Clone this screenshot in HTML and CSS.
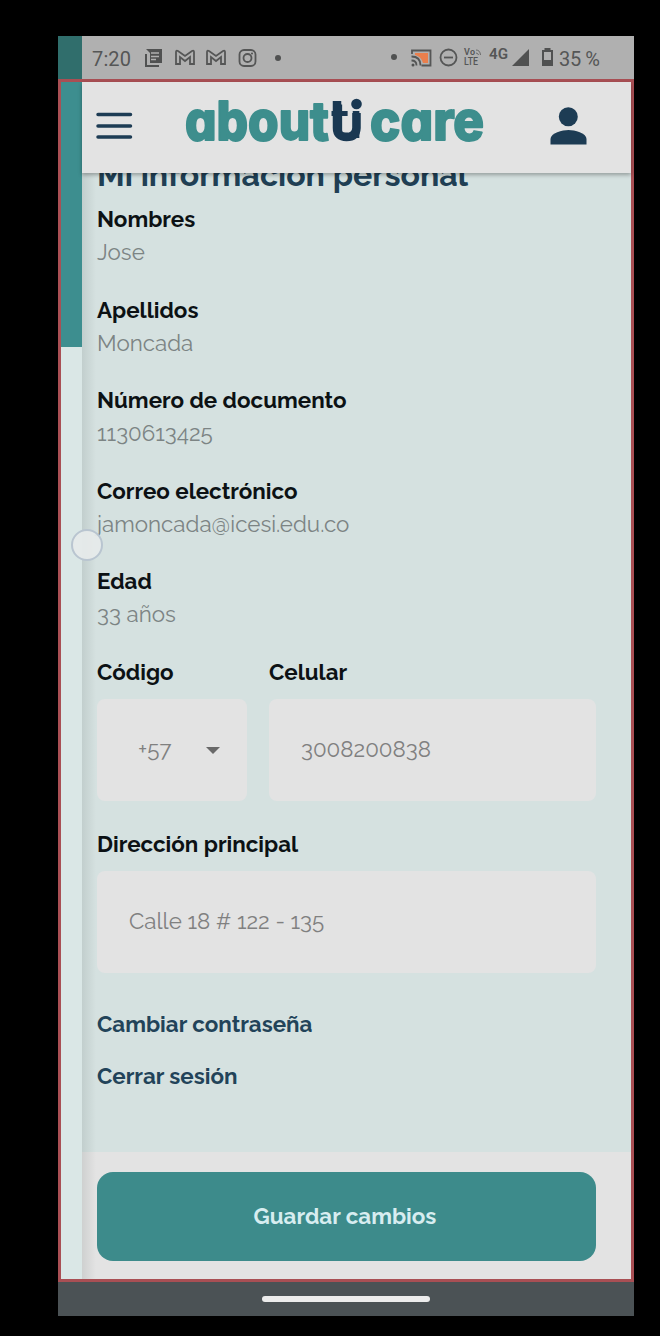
FILE: index.html
```html
<!DOCTYPE html>
<html lang="es">
<head>
<meta charset="utf-8">
<title>Mi información personal</title>
<link rel="stylesheet" href="styles.css">
</head>
<body>
<div class="phone">
  <div class="status">
    <div class="status-strip"></div>
    <div class="status-bar">
      <svg class="status-icons" viewBox="82 36 552 43" width="552" height="43">
        <g class="ink-text"><text x="92" y="66" textLength="39" font-size="20">7:20</text>
        <text x="559" y="66" textLength="41" font-size="20">35 %</text>
        <text x="489" y="59" textLength="19" font-size="15" font-weight="600" lengthAdjust="spacingAndGlyphs">4G</text>
        <text x="464" y="55" textLength="11" font-size="9" font-weight="600">Vo</text>
        <text x="464" y="65" textLength="14" font-size="10" font-weight="500" lengthAdjust="spacingAndGlyphs">LTE</text></g>
        <path class="ink" d="M146 49h16v14h-12v-10zM145 54h2v11h12v2h-14z"/>
        <path d="M151 53h8M151 56.500h8M151 59.500h5" stroke="#b0b0b0" stroke-width="1.400"/>
        <g class="line"><path d="M176 64v-12q0-2 2-1l7 5 7-5q2-1 2 1v12h-4v-7l-5 4-5-4v7z"/>
        <path d="M207 64v-12q0-2 2-1l7 5 7-5q2-1 2 1v12h-4v-7l-5 4-5-4v7z"/>
        <rect x="239.500" y="50" width="16" height="16" rx="4.500"/><circle cx="247.500" cy="58" r="4"/>
        <circle cx="448.500" cy="57.500" r="8"/><path d="M444 57.500h9"/>
        <path d="M412 54v-3.500h18.500v15h-9"/><path d="M411.500 56.500q9 0 9 9M411.500 60.500q5 0 5 5" />
        <path d="M476 50q4 0 4.500 5M476 53q2 0 2.500 2" stroke-width=".8"/></g>
        <path d="M415 53h13v10h-5q-2-7-8-8z" fill="#e97f4d"/>
        <circle class="ink" cx="252" cy="53.500" r="1"/><circle class="ink" cx="278" cy="58" r="3"/><circle class="ink" cx="394" cy="57" r="3"/>
        <circle class="ink" cx="413" cy="65" r="1.500"/>
        <path class="ink" d="M512 66h17v-17z"/>
        <path class="ink" fill-rule="evenodd" d="M544.500 50v-2h6v2h2.500v16h-11v-16zM544 52v8h7v-8z"/>
      </svg>
    </div>
  </div>
  <div class="app">
    <div class="drawer"><div class="drawer-head"></div></div>
    <main class="screen">
      <header class="header">
        <svg viewBox="82 82 549 91" width="549" height="91">
          <path d="M98 114.500h32.500M98 126h32.500M98 137h32.500" stroke="#1d3c54" stroke-width="3.500" stroke-linecap="round"/>
          <g class="logo">
            <text x="185" y="139.500" textLength="144" lengthAdjust="spacingAndGlyphs">about</text>
            <text class="navy" x="331" y="138" textLength="32" lengthAdjust="spacingAndGlyphs">ti</text>
            <text x="370" y="139.500" textLength="114" lengthAdjust="spacingAndGlyphs">care</text>
          </g>
          <path d="M337 101v27q0 9 9.500 9t10-9v-15" fill="none" stroke="#1a3852" stroke-width="8.500"/>
          <circle cx="356.500" cy="104" r="5.300" fill="#1a3852"/>
          <circle cx="568.300" cy="116.800" r="9.500" fill="#1d3c54"/>
          <path d="M550.500 144.500v-5.500c0-6 12-9 18-9s18 3 18 9v5.500z" fill="#1d3c54"/>
        </svg>
      </header>
      <div class="content">
        <h1 class="title">Mi información personal</h1>
        <dl class="info">
          <div class="row"><dt>Nombres</dt><dd>Jose</dd></div>
          <div class="row"><dt>Apellidos</dt><dd>Moncada</dd></div>
          <div class="row"><dt>Número de documento</dt><dd>1130613425</dd></div>
          <div class="row"><dt>Correo electrónico</dt><dd>jamoncada@icesi.edu.co</dd></div>
          <div class="row"><dt>Edad</dt><dd>33 años</dd></div>
        </dl>
        <div class="phone-row">
          <div class="field code"><div class="label">Código</div><div class="input"><span>+57</span><i class="caret"></i></div></div>
          <div class="field cell"><div class="label">Celular</div><div class="input">3008200838</div></div>
        </div>
        <div class="field address"><div class="label">Dirección principal</div><div class="input">Calle 18 # 122 - 135</div></div>
        <nav class="links"><a>Cambiar contraseña</a><a>Cerrar sesión</a></nav>
      </div>
      <footer class="footer"><button class="save">Guardar cambios</button></footer>
    </main>
    <div class="touch"></div>
  </div>
  <div class="navbar"><div class="pill"></div></div>
</div>
</body>
</html>
```
FILE: styles.css
```css
* { box-sizing: border-box; }
body { margin: 0; padding: 36px 26px 20px 58px; background: #000; font-family: "Raleway", "Lato", sans-serif; font-size: 22.35px; font-variant-numeric: oldstyle-nums; }
.phone { height: 1280px; display: flex; flex-direction: column; }
.status { height: 43px; display: flex; }
.status-strip { width: 24px; background: #306e6c; }
.status-bar { flex: 1; background: #b0b0b0; }
svg { display: block; }
.ink { fill: #505151; }
.ink-text { fill: #555656; font-family: Roboto, sans-serif; font-variant-numeric: lining-nums; }
.line { fill: none; stroke: #555656; stroke-width: 1.8; }
.app { position: relative; height: 1203px; border: 3px solid #a94f54; display: flex; }
.drawer { width: 21px; background: #dae7e6; }
.drawer-head { height: 265px; background: #3d8e8f; }
.screen { flex: 1; display: flex; flex-direction: column; position: relative; background: #d5e1e0; }
.screen::after { content: ""; position: absolute; left: 0; top: 0; width: 14px; height: 100%; background: linear-gradient(90deg, rgba(0,20,15,.09), rgba(0,20,15,0)); }
.header { position: relative; z-index: 1; height: 91px; background: #e3e3e3; box-shadow: 0 2px 4px rgba(0,0,0,.3); }
.logo { font-family: Inter, sans-serif; font-size: 54px; font-weight: 800; fill: #3d8e8d; stroke: #3d8e8d; stroke-width: 1.8; stroke-linejoin: round; font-feature-settings: "cv11"; }
.logo .navy { font-size: 50px; font-weight: 600; stroke-width: 0; fill: #1a3852; }
.content { flex: 1; padding: 0 35px 0 15px; }
.title { margin: -17px 0 9px; height: 38px; font-size: 32.1px; line-height: 38px; font-weight: 700; color: #203f54; white-space: nowrap; }
.info { margin: 0; }
.row { height: 90.5px; line-height: 33px; }
dt, .label { font-weight: 700; color: #0c1114; }
dd { margin: 0; color: #7c8484; }
.phone-row { display: flex; gap: 22px; }
.label { height: 43px; line-height: 33px; }
.input { height: 102px; border-radius: 8px; background: #e3e3e3; color: #808080; display: flex; align-items: center; padding: 0 32px 1px; }
.code { width: 150px; }
.code .input { padding: 0 27px 2px 41px; justify-content: space-between; }
.caret { border: 7px solid transparent; border-top-color: #696969; border-bottom: 0; margin-top: 3px; }
.cell { flex: 1; }
.address { margin-top: 27px; }
.links { margin-top: 35px; display: flex; flex-direction: column; gap: 19px; color: #224359; font-weight: 700; line-height: 33px; }
.footer { height: 127px; padding: 20px 35px 18px 15px; background: #e3e3e3; }
.save { display: block; width: 100%; height: 89px; padding: 0 3px 2px 0; border: 0; border-radius: 16px; background: #3d8b8b; color: #d7edf0; font: inherit; font-weight: 700; }
.touch { position: absolute; left: 10px; top: 447px; width: 32px; height: 32px; border-radius: 50%; border: 2px solid #b9c5d0; background: rgba(230,234,234,.95); }
.navbar { height: 34px; background: #4b5255; display: flex; justify-content: center; align-items: center; }
.pill { width: 168px; height: 6px; border-radius: 3px; background: #ececec; }
```
